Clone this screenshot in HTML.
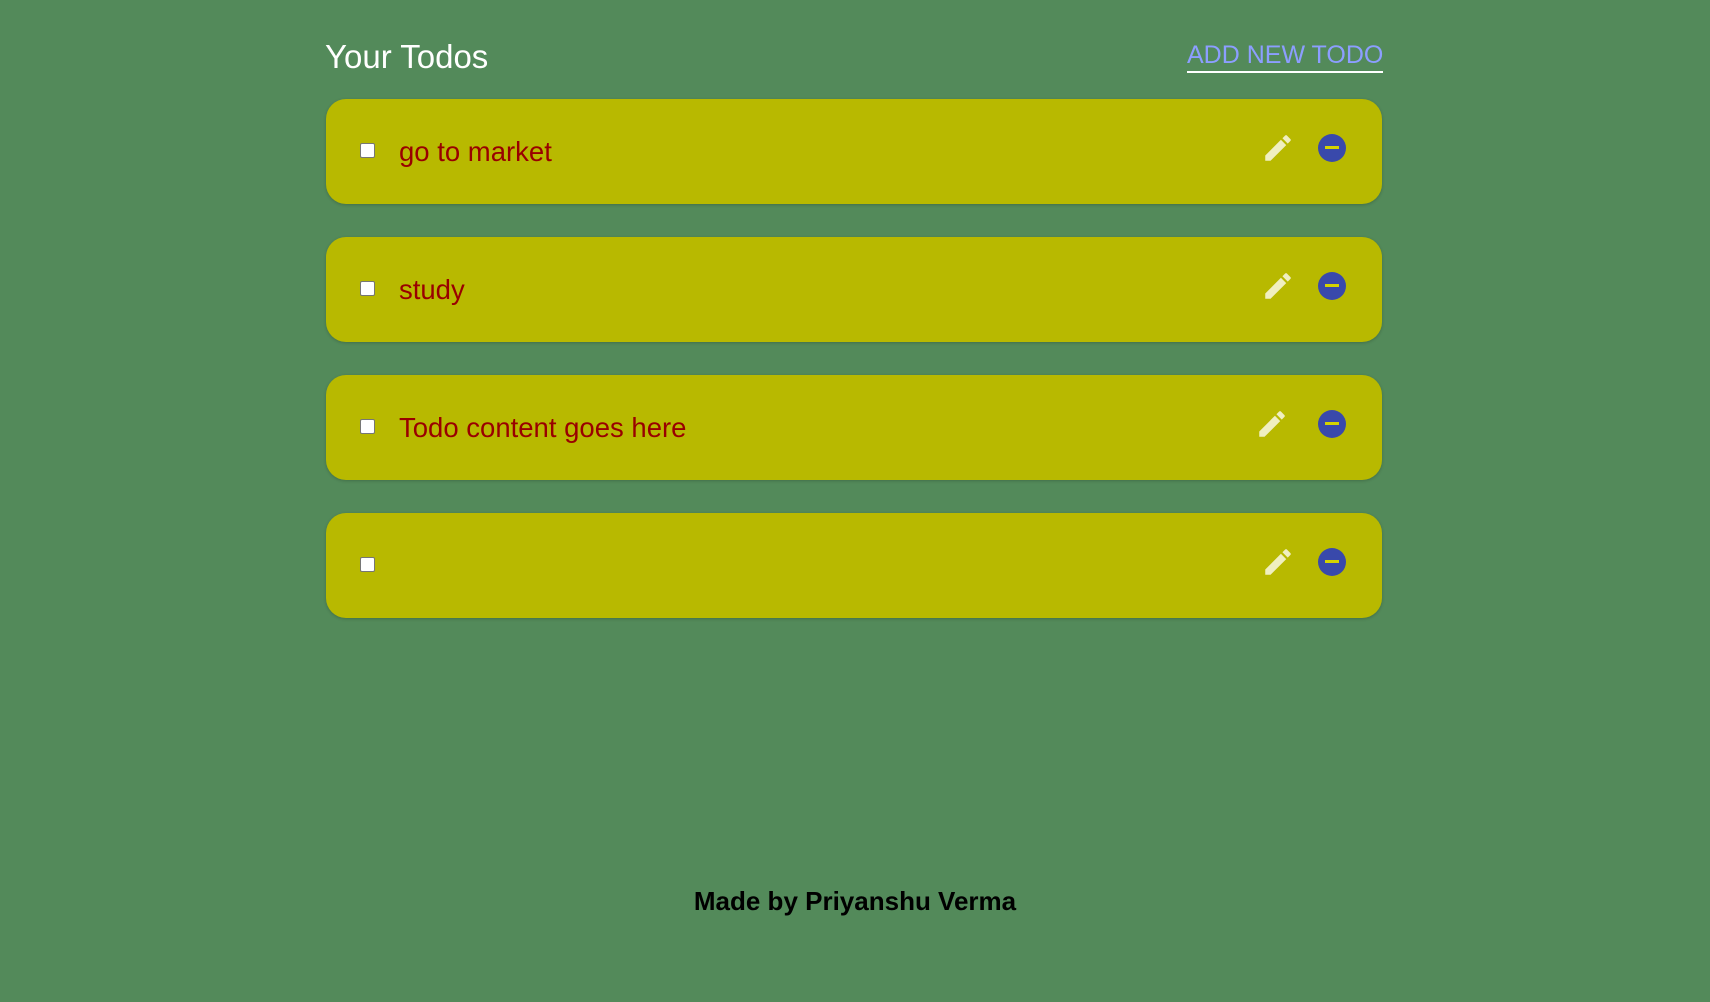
<!DOCTYPE html>
<html><head><style>
html,body{margin:0;padding:0;}
body{width:1710px;height:1002px;background:#538a5a;font-family:"Liberation Sans",Arial,sans-serif;position:relative;overflow:hidden;}
.title{position:absolute;left:325px;top:38px;font-size:33px;color:#fff;}
.add{position:absolute;left:1187px;top:41px;font-size:25px;color:#8c9eff;border-bottom:2px solid #fff;line-height:29px;padding-bottom:1px;}
.card{position:absolute;left:326px;width:1056px;height:105px;background:#b8b900;border-radius:20px;box-shadow:0 1px 3px rgba(0,0,0,.2);}
.cb{position:absolute;left:34px;top:44px;width:13px;height:13px;background:#fff;border:1px solid #767676;border-radius:2px;}
.txt{position:absolute;left:73px;top:37px;font-size:27.5px;color:#990000;}
.pen{position:absolute;left:935px;top:32px;}
.del{position:absolute;left:992px;top:35px;width:28px;height:28px;border-radius:50%;background:#3949ab;}
.del:after{content:"";position:absolute;left:7px;top:12px;width:14px;height:3px;background:#d4d400;}
.foot{position:absolute;left:0;width:1710px;top:886px;text-align:center;font-size:26px;font-weight:bold;color:#000;}
</style></head><body>
<div class="title">Your Todos</div>
<div class="add">ADD NEW TODO</div>

<div class="card" style="top:99px"><div class="cb"></div><div class="txt">go to market</div>
<svg class="pen" width="34" height="34" viewBox="0 0 24 24"><path fill="#f0efc0" d="M3 17.25V21h3.75L17.81 9.94l-3.75-3.75L3 17.25zM20.71 7.04a1 1 0 0 0 0-1.41l-2.34-2.34a1 1 0 0 0-1.41 0l-1.83 1.83 3.75 3.75 1.83-1.83z"/></svg>
<div class="del"></div></div>

<div class="card" style="top:237px"><div class="cb"></div><div class="txt">study</div>
<svg class="pen" width="34" height="34" viewBox="0 0 24 24"><path fill="#f0efc0" d="M3 17.25V21h3.75L17.81 9.94l-3.75-3.75L3 17.25zM20.71 7.04a1 1 0 0 0 0-1.41l-2.34-2.34a1 1 0 0 0-1.41 0l-1.83 1.83 3.75 3.75 1.83-1.83z"/></svg>
<div class="del"></div></div>

<div class="card" style="top:375px"><div class="cb"></div><div class="txt">Todo content goes here</div>
<svg class="pen" style="left:929px" width="34" height="34" viewBox="0 0 24 24"><path fill="#f0efc0" d="M3 17.25V21h3.75L17.81 9.94l-3.75-3.75L3 17.25zM20.71 7.04a1 1 0 0 0 0-1.41l-2.34-2.34a1 1 0 0 0-1.41 0l-1.83 1.83 3.75 3.75 1.83-1.83z"/></svg>
<div class="del"></div></div>

<div class="card" style="top:513px"><div class="cb"></div>
<svg class="pen" width="34" height="34" viewBox="0 0 24 24"><path fill="#f0efc0" d="M3 17.25V21h3.75L17.81 9.94l-3.75-3.75L3 17.25zM20.71 7.04a1 1 0 0 0 0-1.41l-2.34-2.34a1 1 0 0 0-1.41 0l-1.83 1.83 3.75 3.75 1.83-1.83z"/></svg>
<div class="del"></div></div>

<div class="foot">Made by Priyanshu Verma</div>
</body></html>
